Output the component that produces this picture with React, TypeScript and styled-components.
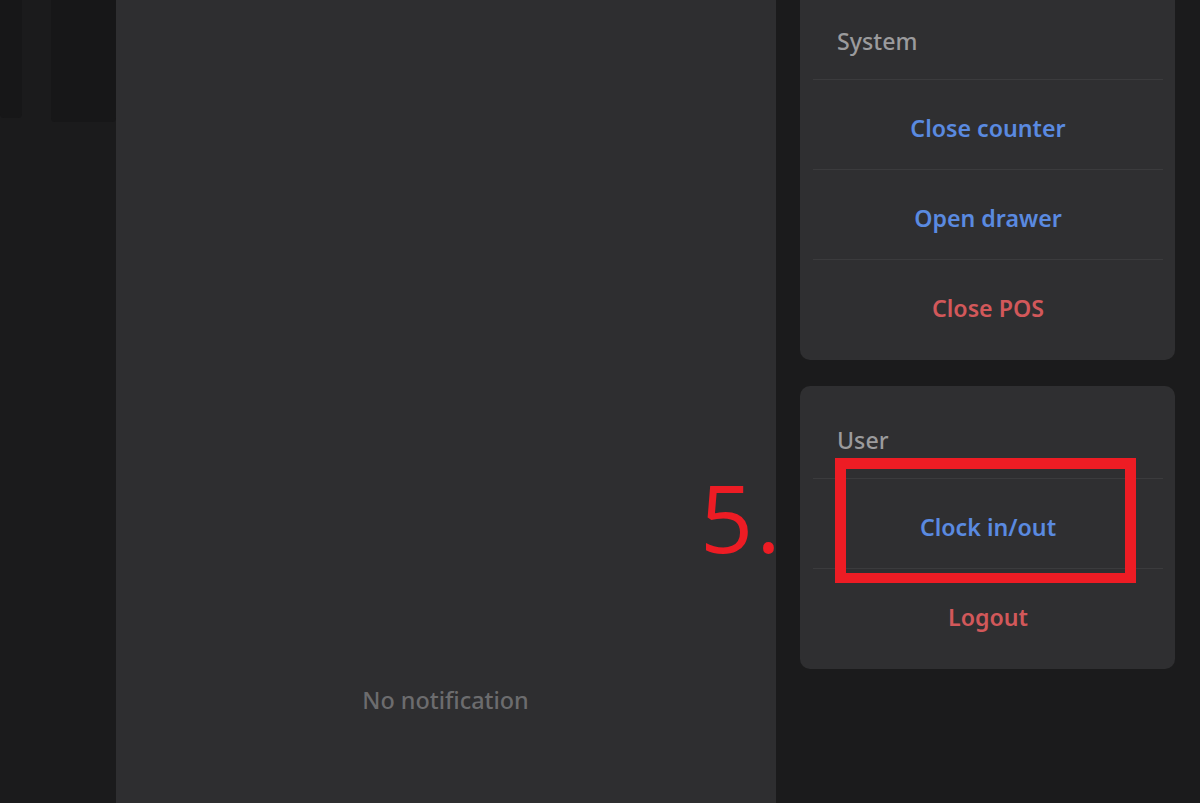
import React from "react";
import styled, { createGlobalStyle } from "styled-components";

const Global = createGlobalStyle`
  html, body { margin: 0; padding: 0; background: #1b1b1c; }
  body { font-family: "Noto Sans", "Open Sans", sans-serif; }
  #root { width: 1200px; height: 803px; overflow: hidden; }
`;

const Screen = styled.div`
  position: relative;
  display: flex;
  width: 1200px;
  height: 803px;
  background: #1b1b1c;
  overflow: hidden;
`;

const LeftRail = styled.div`
  width: 116px;
  flex-shrink: 0;
  display: flex;
  align-items: flex-start;
  gap: 29px;
`;

const Shade = styled.div<{ $w: number; $h: number }>`
  width: ${(p) => p.$w}px;
  height: ${(p) => p.$h}px;
  background: #171718;
  border-bottom-right-radius: 4px;
  border-bottom-left-radius: 4px;
`;

const Center = styled.main`
  width: 660px;
  flex-shrink: 0;
  background: #2e2e30;
  display: flex;
  flex-direction: column;
  justify-content: flex-end;
  align-items: center;
  padding-bottom: 88px;
  box-sizing: border-box;
`;

const Empty = styled.div`
  font-size: 23.4px;
  line-height: 30px;
  color: #6c6c6e;
  font-weight: 500;
  margin-left: -1px;
`;

const Side = styled.aside`
  width: 375px;
  margin-left: 24px;
  display: flex;
  flex-direction: column;
  gap: 26px;
  margin-top: -13px;
`;

const Card = styled.section`
  background: #2f2f31;
  border-radius: 10px;
  padding-bottom: 11px;
`;

const Label = styled.div`
  padding: 40px 0 24px 37px;
  font-size: 23.2px;
  line-height: 28px;
  color: #9b9b9d;
  font-weight: 500;
`;

const Row = styled.div<{ $tone: "blue" | "red" }>`
  margin: 0 12px 0 13px;
  height: 90px;
  box-sizing: border-box;
  border-top: 1px solid #3b3b3d;
  display: flex;
  align-items: center;
  justify-content: center;
  font-size: 23.2px;
  font-weight: 600;
  padding-top: 6px;
  color: ${(p) => (p.$tone === "blue" ? "#5a8ae0" : "#d2585a")};
`;

const Mark = styled.div`
  position: absolute;
  left: 835px;
  top: 458px;
  width: 301px;
  height: 125px;
  box-sizing: border-box;
  border: 11px solid #ed1c24;
  border-bottom-width: 10px;
`;

const Step = styled.div`
  position: absolute;
  left: 700px;
  top: 462px;
  font-family: "Open Sans", "Noto Sans", sans-serif;
  font-size: 93px;
  line-height: 110px;
  color: #ed1c24;
  letter-spacing: 3px;
`;

export default function App() {
  return (
    <Screen>
      <Global />
      <LeftRail>
        <Shade $w={22} $h={118} />
        <Shade $w={65} $h={122} />
      </LeftRail>
      <Center>
        <Empty>No notification</Empty>
      </Center>
      <Side>
        <Card>
          <Label>System</Label>
          <Row $tone="blue">Close counter</Row>
          <Row $tone="blue">Open drawer</Row>
          <Row $tone="red">Close POS</Row>
        </Card>
        <Card>
          <Label>User</Label>
          <Row $tone="blue">Clock in/out</Row>
          <Row $tone="red">Logout</Row>
        </Card>
      </Side>
      <Step>5.</Step>
      <Mark />
    </Screen>
  );
}
